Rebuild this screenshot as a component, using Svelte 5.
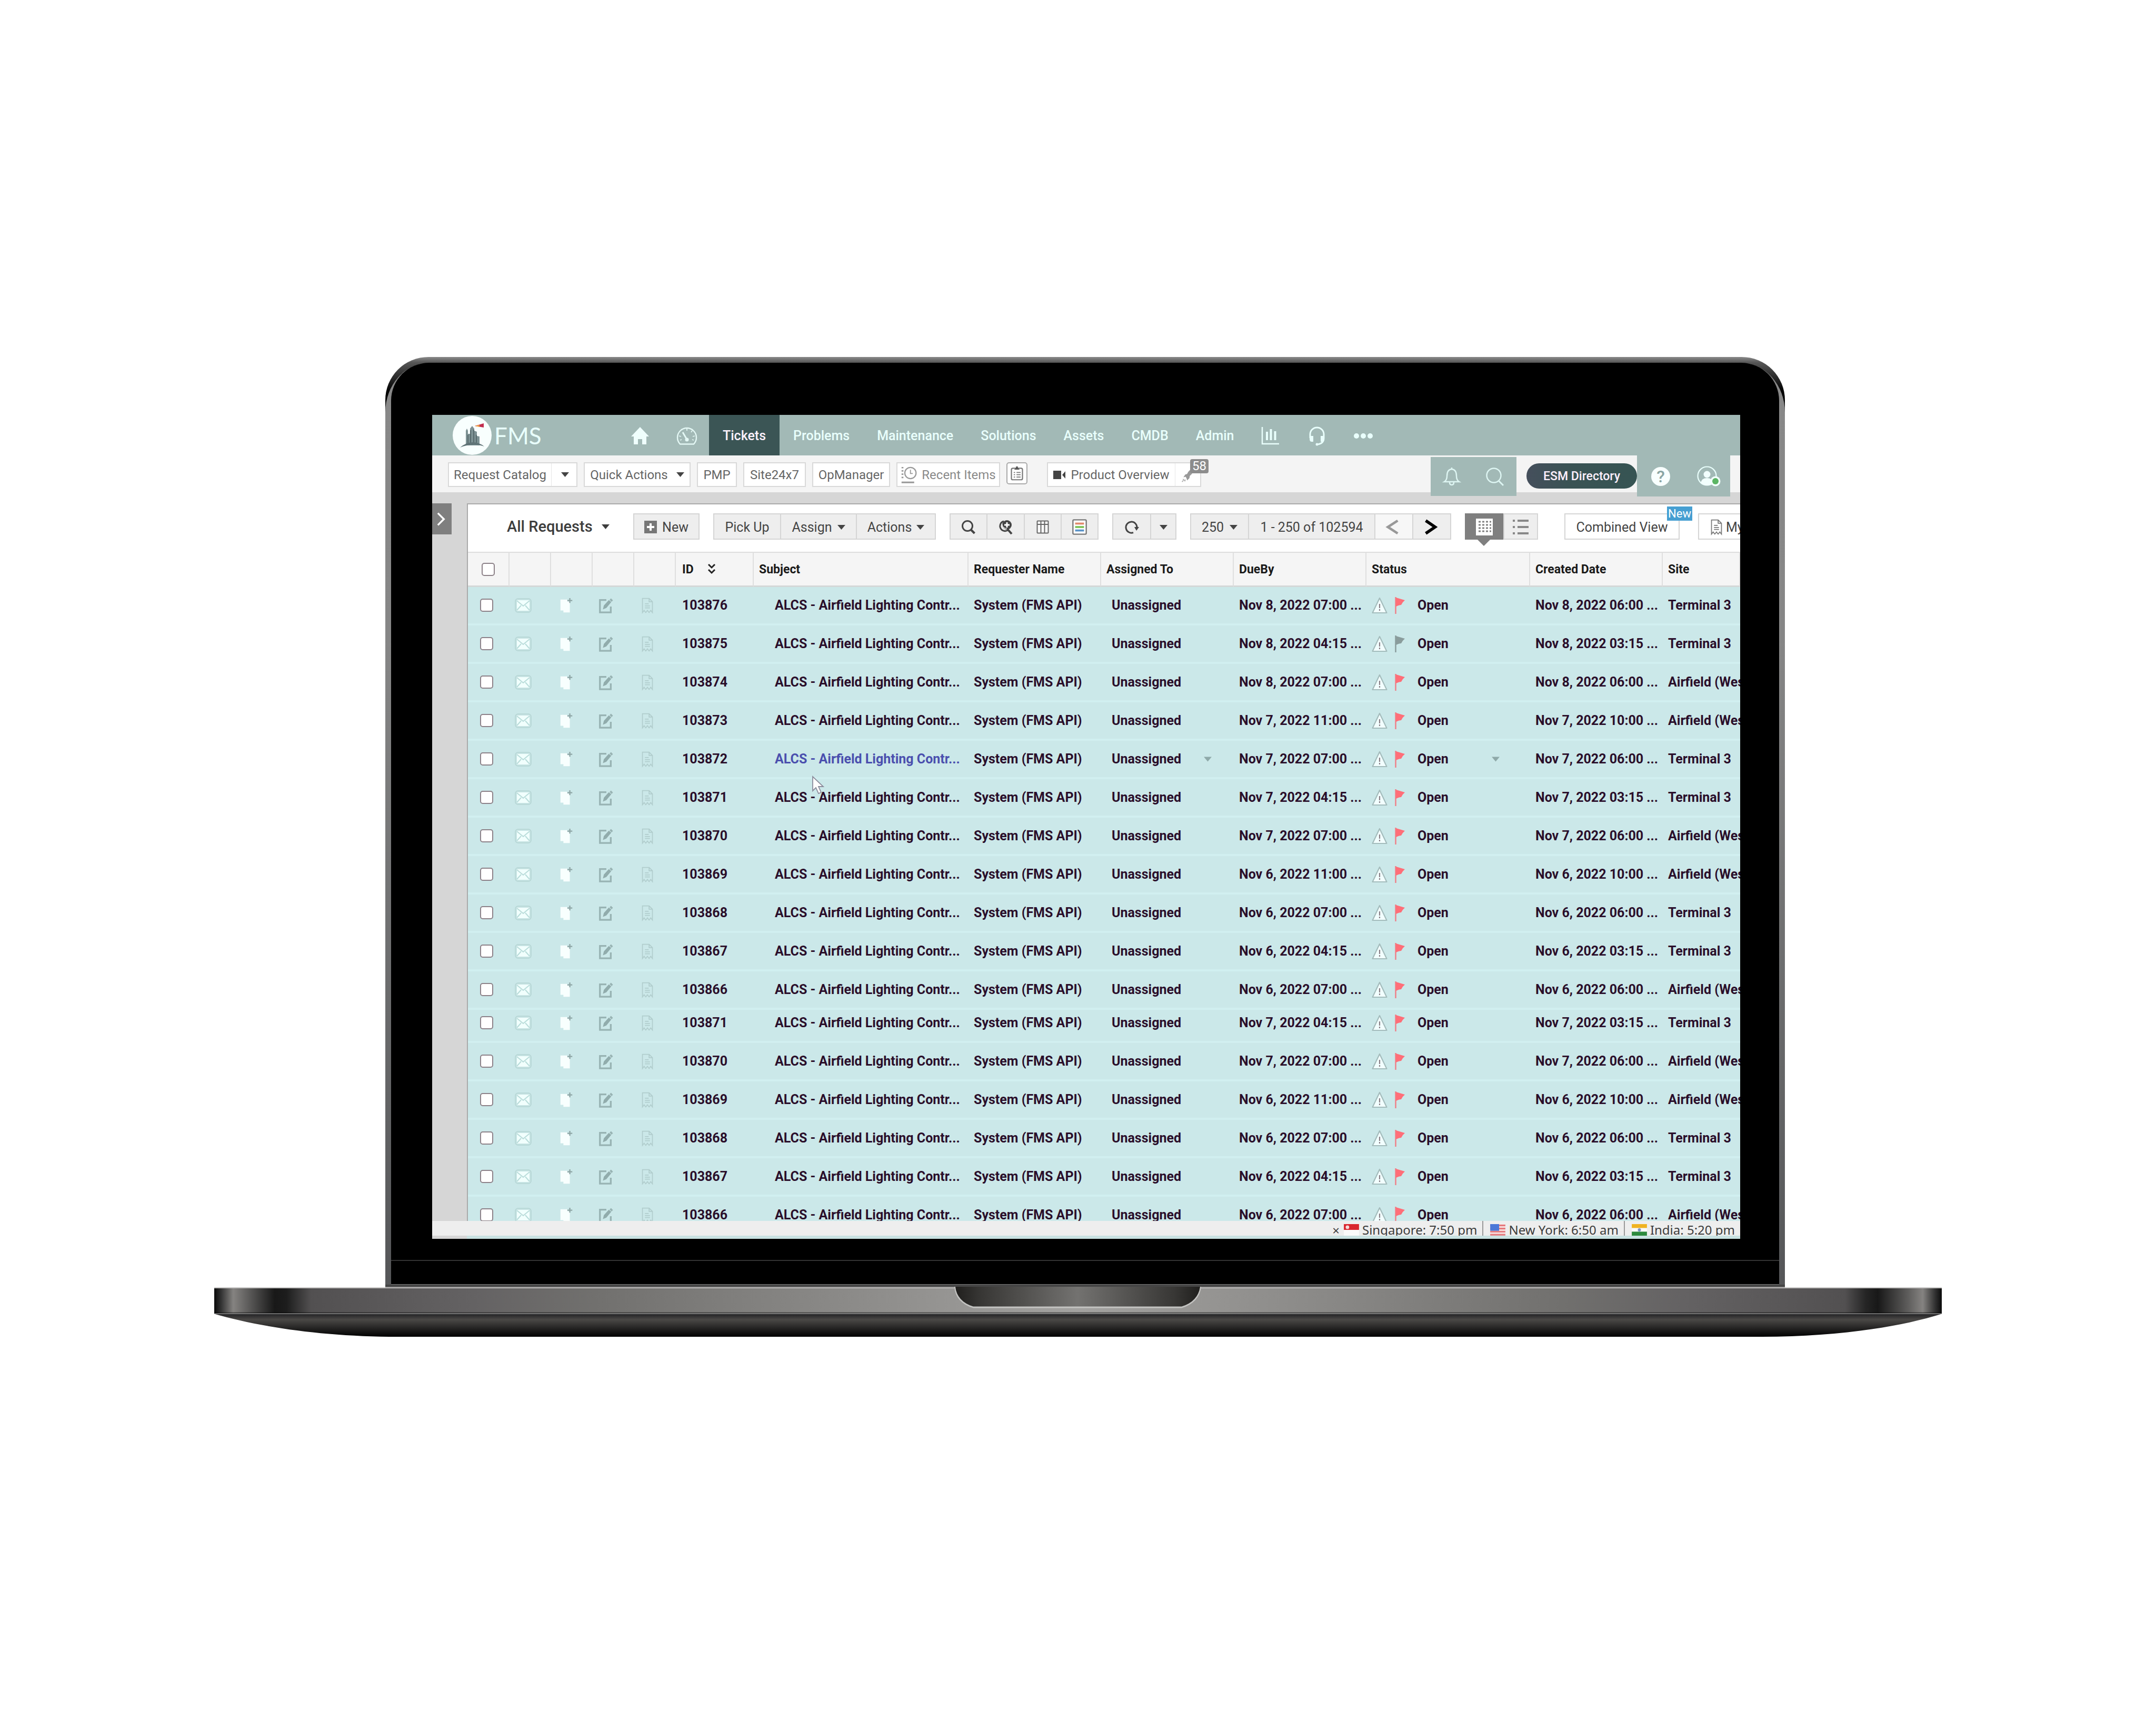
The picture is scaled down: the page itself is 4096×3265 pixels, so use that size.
<script>
  const modules = ['Problems', 'Maintenance', 'Solutions', 'Assets', 'CMDB', 'Admin'];

  const T3 = 'Terminal 3';
  const AW = 'Airfield (West)';
  const tail = [
    ['103871', 'Nov 7, 2022 04:15 ...', 'Nov 7, 2022 03:15 ...', T3],
    ['103870', 'Nov 7, 2022 07:00 ...', 'Nov 7, 2022 06:00 ...', AW],
    ['103869', 'Nov 6, 2022 11:00 ...', 'Nov 6, 2022 10:00 ...', AW],
    ['103868', 'Nov 6, 2022 07:00 ...', 'Nov 6, 2022 06:00 ...', T3],
    ['103867', 'Nov 6, 2022 04:15 ...', 'Nov 6, 2022 03:15 ...', T3],
    ['103866', 'Nov 6, 2022 07:00 ...', 'Nov 6, 2022 06:00 ...', AW]
  ];
  const rows = [
    ['103876', 'Nov 8, 2022 07:00 ...', 'Nov 8, 2022 06:00 ...', T3],
    ['103875', 'Nov 8, 2022 04:15 ...', 'Nov 8, 2022 03:15 ...', T3],
    ['103874', 'Nov 8, 2022 07:00 ...', 'Nov 8, 2022 06:00 ...', AW],
    ['103873', 'Nov 7, 2022 11:00 ...', 'Nov 7, 2022 10:00 ...', AW],
    ['103872', 'Nov 7, 2022 07:00 ...', 'Nov 7, 2022 06:00 ...', T3],
    ...tail,
    ...tail
  ].map(([id, due, created, site], i) => ({
    id, due, created, site,
    hovered: i === 4,
    greyFlag: i === 1,
    short: i === 11
  }));
</script>

{#snippet caret()}
  <svg class="caret" viewBox="0 0 15 9" aria-hidden="true"><path d="M0 0h15L7.5 9z" fill="currentColor" /></svg>
{/snippet}

{#snippet magnifier()}
  <svg class="i28" viewBox="0 0 28 28" fill="none" stroke="#444" aria-hidden="true">
    <circle cx="12" cy="12" r="9.5" stroke-width="3" /><path d="M18.500 19l7 7" stroke-width="4" />
  </svg>
{/snippet}

{#snippet receipt(color)}
  <svg class="i30" viewBox="0 0 30 38" fill="none" stroke={color} stroke-width="2.200" aria-hidden="true">
    <path d="M3 2h16l8 8v26l-4-5-4 5-4-5-4 5-4-5-4 5z" /><path d="M19 2v8h8M9 15h9M9 20h12M9 25h12" />
  </svg>
{/snippet}

<main class="page">
  <div class="lid">
    <div class="rim">
      <div class="bezel">
        <div class="screen">
          <header class="topnav">
            <a class="logo" href="#home">
              <svg class="mark" viewBox="0 0 74 74" aria-hidden="true">
                <circle cx="37" cy="37" r="37" fill="#f8fffe" />
                <path d="M25 56V28l2-4 2 4v6h4V24l4-5 4 5v4l5 2v8l5 1v17z" fill="#7d9294" />
                <path d="M29 55V36M34 54V27M40 54V26M45 55V36" stroke="#56696c" stroke-width="2" />
                <path d="M14 60q12-10 24-10t22 8q-12-4-22-3-12 0-24 5z" fill="#5f7376" />
                <path d="M42 19l17-5v8z" fill="#c22d4e" /><path d="M42 19l9-2v4z" fill="#f0a040" />
              </svg>
              <span>FMS</span>
            </a>
            <nav aria-label="Modules">
              <a href="#start" aria-label="Home">
                <svg class="n36" viewBox="0 0 36 36"><path d="M18 1l17 18h-5v15h-8V24h-8v10H6V19H1z" fill="#effffd" /></svg>
              </a>
              <a href="#dashboard" class="gauge" aria-label="Dashboard">
                <svg class="n40" viewBox="0 0 40 36" fill="none" stroke="#e4f8f5" stroke-width="2.400">
                  <path d="M7 33.500A18 18 0 1 1 33 33.500z" /><path d="M12 11l7 12" stroke-width="3" />
                  <circle cx="20" cy="25" r="3.500" fill="#e4f8f5" stroke="none" />
                  <path d="M20 4v4M30 8l-2 3M35 18l-4 1M5 18l4 1M33 26l-3-1M7 26l3-1" stroke-width="1.800" />
                </svg>
              </a>
              <a href="#tickets" class="current" aria-current="page">Tickets</a>
              {#each modules as name}
                <a href="#{name.toLowerCase()}">{name}</a>
              {/each}
              <a href="#reports" aria-label="Reports">
                <svg class="n36" viewBox="0 0 36 36" fill="none" stroke="#e9fffc">
                  <path d="M2 1v32h32" stroke-width="2.500" /><path d="M11 10v16M18.500 5v21M26.500 9v17" stroke-width="4" />
                </svg>
              </a>
              <a href="#support" aria-label="Support">
                <svg class="n36" viewBox="0 0 36 36" fill="none" stroke="#e9fffc" stroke-width="3">
                  <path d="M5 22v-7a13 13 0 0 1 26 0v7q0 10-11 12" />
                  <path d="M4 18h7v11H8q-4 0-4-5zM32 18h-7v11h3q4 0 4-5z" fill="#e9fffc" stroke="none" />
                  <circle cx="18" cy="34" r="2.500" fill="#e9fffc" stroke="none" />
                </svg>
              </a>
              <a href="#more" aria-label="More">
                <svg class="n36" viewBox="0 0 36 36" fill="#e9fffc"><circle cx="5" cy="18" r="5" /><circle cx="18" cy="18" r="5" /><circle cx="31" cy="18" r="5" /></svg>
              </a>
            </nav>
          </header>

          <div class="subbar">
            <div class="split catalog">
              <button type="button">Request Catalog</button>
              <button type="button" aria-label="Open catalog menu">{@render caret()}</button>
            </div>
            <button type="button" class="chip quick">Quick Actions {@render caret()}</button>
            <button type="button" class="chip pmp">PMP</button>
            <button type="button" class="chip site">Site24x7</button>
            <button type="button" class="chip opm">OpManager</button>
            <button type="button" class="chip recent">
              <svg class="i32" viewBox="0 0 34 36" fill="none" stroke="#999" aria-hidden="true">
                <circle cx="20" cy="14" r="12" stroke-width="2.500" /><path d="M20 7v8h5" stroke-width="2" />
                <path d="M3 1v26" stroke-width="4" stroke-dasharray="3 4" /><path d="M1 34h27" stroke-width="3.500" />
              </svg>
              Recent Items
            </button>
            <button type="button" class="chip clip" aria-label="Announcements">
              <svg class="i28" viewBox="0 0 28 32" fill="none" stroke="#777" stroke-width="2" aria-hidden="true">
                <rect x="2" y="5" width="24" height="25" rx="3" stroke-width="2.500" />
                <path d="M8 8h12l-4-4V1h-4v3z" fill="#555" stroke="none" />
                <path d="M7 14h3M7 19h3M7 24h3M13 14h9M13 19h9M13 24h9" />
              </svg>
            </button>
            <div class="split product">
              <button type="button">
                <svg class="cam" viewBox="0 0 24 18" fill="#444" aria-hidden="true"><path d="M0 1h15v16H0zM23 2v14l-6-7z" /></svg>
                Product Overview
              </button>
              <button type="button" aria-label="Launch tour, 58 items">
                <svg class="i28" viewBox="0 0 28 32" fill="#999" aria-hidden="true">
                  <path d="M26 2q-10 2-14 12l-4 1-4 6 5-1 2 4 1 4 5-5 1-5q8-6 8-16z" />
                  <path d="M3 25l3 3M1 31l3-3M8 26l-1 4" stroke="#aaa" stroke-width="2" />
                </svg>
                <span class="count">58</span>
              </button>
            </div>

            <div class="tools">
              <button type="button" aria-label="Notifications">
                <svg class="n36" viewBox="0 0 36 36" fill="none" stroke="#ddf5f2" stroke-width="2.500">
                  <path d="M18 1v3M4 28q5-3 5-11 0-12 9-13 9 1 9 13 0 8 5 11zM14 29q0 5 4 5t4-5" />
                </svg>
              </button>
              <button type="button" aria-label="Search">
                <svg class="n36" viewBox="0 0 36 36" fill="none" stroke="#ddf5f2" stroke-width="2.500"><circle cx="16" cy="16" r="13.500" /><path d="M25 26l9 9" stroke-width="3" /></svg>
              </button>
            </div>
            <button type="button" class="pill">ESM Directory</button>
            <div class="account">
              <button type="button" class="help" aria-label="Help">?</button>
              <button type="button" aria-label="Profile">
                <svg class="avatar" viewBox="0 0 46 40">
                  <circle cx="19" cy="19" r="17.500" fill="none" stroke="#e9fffc" stroke-width="2.200" />
                  <circle cx="19" cy="16" r="6.500" fill="#f2fffd" /><path d="M7 32q2-9 12-9t12 9q-5 5-12 5T7 32z" fill="#f2fffd" />
                  <circle cx="35" cy="29" r="9.500" fill="#f2fffd" /><circle cx="35" cy="29" r="6" fill="#5bb564" />
                </svg>
              </button>
            </div>
          </div>

          <div class="body">
            <aside>
              <button type="button" aria-label="Expand side panel">
                <svg class="chev" viewBox="0 0 18 32" fill="none" stroke="#fff" stroke-width="4"><path d="M2 3l13 13L2 29" /></svg>
              </button>
            </aside>

            <section class="panel" aria-label="Requests">
              <div class="toolbar">
                <button type="button" class="view">All Requests {@render caret()}</button>
                <div class="group new">
                  <button type="button">
                    <svg class="plus" viewBox="0 0 24 24" aria-hidden="true"><path d="M0 0h24v24H0z" fill="#777" /><path d="M12 5v14M5 12h14" stroke="#fff" stroke-width="4" /></svg>
                    New
                  </button>
                </div>
                <div class="group acts">
                  <button type="button">Pick Up</button>
                  <button type="button">Assign {@render caret()}</button>
                  <button type="button">Actions {@render caret()}</button>
                </div>
                <div class="group finders">
                  <button type="button" aria-label="Search">{@render magnifier()}</button>
                  <button type="button" aria-label="Advanced search">
                    <svg class="i28" viewBox="0 0 28 28" fill="none" stroke="#444" aria-hidden="true">
                      <path d="M11 3A9.500 9.500 0 1 0 20 19" stroke-width="3" /><circle cx="17" cy="10" r="9" fill="#444" stroke="none" />
                      <path d="M17 5v10M12 10h10" stroke="#fff" stroke-width="3" /><path d="M18 18l8 9" stroke-width="4" /><path d="M8 9q0 8 9 8" stroke="#ddd" stroke-width="1.500" />
                    </svg>
                  </button>
                  <button type="button" aria-label="Columns">
                    <svg class="i24" viewBox="0 0 24 26" fill="none" stroke="#666" stroke-width="2" aria-hidden="true"><rect x="1.500" y="1.500" width="21" height="23" rx="1" fill="#fafafa" /><path d="M8.500 2v22M15.500 2v22M2 8h20" /></svg>
                  </button>
                  <button type="button" aria-label="Colour rules">
                    <svg class="i30" viewBox="0 0 30 32" aria-hidden="true">
                      <rect x="1.500" y="1.500" width="27" height="29" rx="2" fill="#fff" stroke="#777" stroke-width="2.500" />
                      <path d="M6 9h18" stroke="#e08a6c" stroke-width="4" /><path d="M6 16h18" stroke="#7dc257" stroke-width="4" /><path d="M6 23h18" stroke="#5a93c8" stroke-width="4" />
                    </svg>
                  </button>
                </div>
                <div class="group reload">
                  <button type="button" aria-label="Refresh">
                    <svg class="i28" viewBox="0 0 28 28" fill="none" stroke="#444" stroke-width="3" aria-hidden="true"><path d="M17 24.500A10.500 10.500 0 1 1 24 15" /><path d="M19 14h9l-5 7z" fill="#444" stroke="none" /></svg>
                  </button>
                  <button type="button" aria-label="Refresh interval">{@render caret()}</button>
                </div>
                <div class="group pager">
                  <label class="size">
                    <select aria-label="Rows per page"><option>250</option></select>
                    {@render caret()}
                  </label>
                  <span>1 - 250 of 102594</span>
                  <button type="button" class="prev" aria-label="Previous page">
                    <svg class="i28" viewBox="0 0 28 30" fill="none" stroke="#999" stroke-width="5"><path d="M24 2L4 15l20 13" /></svg>
                  </button>
                  <button type="button" aria-label="Next page">
                    <svg class="i28" viewBox="0 0 28 30" fill="none" stroke="#000" stroke-width="6"><path d="M4 2l19 13L4 28" /></svg>
                  </button>
                </div>
                <div class="group layout">
                  <button type="button" class="on" aria-label="Grid view">
                    <svg class="i32" viewBox="0 0 32 32"><path d="M0 0h32v32H0z" fill="#fff" /><path d="M5 6h24M5 12h24M5 18h24M5 24h24" stroke="#808080" stroke-width="3" stroke-dasharray="4 3" /></svg>
                  </button>
                  <button type="button" aria-label="List view">
                    <svg class="i30" viewBox="0 0 30 30" stroke="#888" stroke-width="4"><path d="M0 3h4M9 3h21M0 15h4M9 15h21M0 27h4M9 27h21" /></svg>
                  </button>
                </div>
                <div class="group combined">
                  <button type="button">Combined View</button>
                  <span class="tag">New</span>
                </div>
                <div class="group mine">
                  <button type="button">{@render receipt('#777')} My</button>
                </div>
              </div>

              <table>
                <colgroup>
                  <col class="c-tool" /><col class="c-tool" /><col class="c-tool" /><col class="c-tool" /><col class="c-tool" />
                  <col class="c-id" /><col class="c-subject" /><col class="c-mid" /><col class="c-mid" /><col class="c-mid" />
                  <col class="c-status" /><col class="c-mid" /><col class="c-site" />
                </colgroup>
                <thead>
                  <tr>
                    <th class="tick"><input type="checkbox" aria-label="Select all requests" /></th>
                    <td></td><td></td><td></td><td></td>
                    <th scope="col">ID
                      <svg class="sort" viewBox="0 0 14 22" fill="none" stroke="#222" stroke-width="3" aria-hidden="true"><path d="M1 2l6 6 6-6M1 12l6 6 6-6" /></svg>
                    </th>
                    <th scope="col">Subject</th><th scope="col">Requester Name</th><th scope="col">Assigned To</th>
                    <th scope="col">DueBy</th><th scope="col">Status</th><th scope="col">Created Date</th><th scope="col">Site</th>
                  </tr>
                </thead>
                <tbody>
                  {#each rows as r}
                    <tr class:short={r.short}>
                      <td class="tick"><input type="checkbox" aria-label="Select request {r.id}" /></td>
                      <td>
                        <svg class="i32" viewBox="0 0 32 28" aria-hidden="true"><rect x="1" y="1" width="30" height="26" rx="5" fill="#c6e3e3" stroke="#b5d5d4" stroke-width="1.500" /><path d="M4 4h24v20H4z" fill="#f1fffd" /><path d="M4 5l12 10L28 5M4 23l8-9M28 23l-8-9" fill="none" stroke="#b9dcda" stroke-width="2" /></svg>
                      </td>
                      <td class="note">
                        <svg class="i30" viewBox="0 0 30 32" aria-hidden="true"><path d="M3 4h14v4h5v22H9v-4H3z" fill="#f8fffe" /><path d="M22 1v10M17 6h10" stroke="#8ea5a5" stroke-width="2.500" /></svg>
                      </td>
                      <td>
                        <svg class="i30" viewBox="0 0 30 32" fill="none" stroke="#98b3b3" aria-hidden="true"><path d="M16 5H3v25h22V18" stroke-width="3.500" /><path d="M9 24l2-8L21 5l5 4-10 12z" fill="#91acac" stroke="none" /><path d="M24 3l4 4" stroke-width="4" /></svg>
                      </td>
                      <td>{@render receipt('#b1cdcd')}</td>
                      <td>{r.id}</td>
                      <td class="subject"><a href="#request-{r.id}" class:hovered={r.hovered}>ALCS - Airfield Lighting Contr...</a></td>
                      <td>System (FMS API)</td>
                      <td class="assigned">Unassigned{#if r.hovered}<i class="drop a">{@render caret()}</i>{/if}</td>
                      <td>{r.due}</td>
                      <td>
                        <div class="status">
                          <svg class="warn" viewBox="0 0 30 32" aria-hidden="true"><path d="M15 2l13.500 28h-27z" fill="#f2ffff" stroke="#a4bcbc" stroke-width="2.200" stroke-linejoin="round" /><path d="M15 13v8M15 23v3" stroke="#8b7f86" stroke-width="2.200" /></svg>
                          <svg class="flag" viewBox="0 0 20 34" aria-hidden="true"><path d="M1.500 1v32" stroke={r.greyFlag ? '#8a9c9c' : '#ee8088'} stroke-width="2.500" /><path d="M2 2l17 5q-4 3-7 9-4 0-10 3z" fill={r.greyFlag ? '#8a9c9c' : '#ff6e78'} /></svg>
                          <span>Open</span>
                          {#if r.hovered}<i class="drop s">{@render caret()}</i>{/if}
                        </div>
                      </td>
                      <td>{r.created}</td>
                      <td>{r.site}</td>
                    </tr>
                  {/each}
                </tbody>
              </table>
              <svg class="pointer" viewBox="0 0 24 36" aria-hidden="true"><path d="M2 2v27l6-6 5 11 5-2-5-11h9z" fill="#fff" stroke="#8b8b9b" stroke-width="1.800" /></svg>
            </section>
          </div>

          <footer>
            <button type="button" class="close" aria-label="Close clocks">×</button>
            <span class="clock">
              <svg class="country" viewBox="0 0 34 26" aria-hidden="true"><path d="M0 0h34v13H0z" fill="#d9262e" /><path d="M0 13h34v13H0z" fill="#fafafa" /><circle cx="8" cy="7" r="4" fill="#f5dcdc" /></svg>
              Singapore: 7:50 pm
            </span>
            <span class="clock">
              <svg class="country" viewBox="0 0 34 26" aria-hidden="true"><path d="M0 0h34v26H0z" fill="#f7dede" /><path d="M0 3h34M0 10h34M0 17h34M0 24h34" stroke="#e4787c" stroke-width="3.500" /><path d="M0 0h20v15H0z" fill="#4b78d8" /></svg>
              New York: 6:50 am
            </span>
            <span class="clock">
              <svg class="country" viewBox="0 0 34 26" aria-hidden="true"><path d="M0 0h34v9H0z" fill="#f0b323" /><path d="M0 9h34v8H0z" fill="#fafafa" /><path d="M0 17h34v9H0z" fill="#2d8a3e" /><circle cx="17" cy="13" r="3.500" fill="#7e93c4" /></svg>
              India: 5:20 pm
            </span>
          </footer>
          <div class="sliver"></div>
        </div>
        <div class="chin"></div>
      </div>
    </div>
  </div>

  <svg class="base" viewBox="0 0 3282 96" preserveAspectRatio="none" aria-hidden="true">
    <defs>
      <linearGradient id="deck" x1="0" x2="1" y1="0" y2="0">
        <stop offset="0" stop-color="#0a0a0a" /><stop offset=".004" stop-color="#333" /><stop offset=".011" stop-color="#858381" />
        <stop offset=".02" stop-color="#5c5b5a" /><stop offset=".035" stop-color="#181818" /><stop offset=".042" stop-color="#1d1d1d" />
        <stop offset=".044" stop-color="#252525" /><stop offset=".056" stop-color="#525051" /><stop offset=".15" stop-color="#646263" />
        <stop offset=".22" stop-color="#71706e" /><stop offset=".5" stop-color="#a3a2a0" />
        <stop offset=".78" stop-color="#71706e" /><stop offset=".85" stop-color="#646263" /><stop offset=".944" stop-color="#525051" />
        <stop offset=".956" stop-color="#252525" /><stop offset=".963" stop-color="#181818" /><stop offset=".98" stop-color="#5c5b5a" />
        <stop offset=".989" stop-color="#858381" /><stop offset=".996" stop-color="#333" /><stop offset="1" stop-color="#0a0a0a" />
      </linearGradient>
      <linearGradient id="belly" x1="0" x2="0" y1="0" y2="1">
        <stop offset="0" stop-color="#222224" /><stop offset=".25" stop-color="#4a4846" /><stop offset=".55" stop-color="#2c2b2a" /><stop offset="1" stop-color="#000" />
      </linearGradient>
      <linearGradient id="thumb" x1="0" x2="1" y1="0" y2="0">
        <stop offset="0" stop-color="#201f1d" /><stop offset=".1" stop-color="#373634" /><stop offset=".5" stop-color="#737270" /><stop offset=".9" stop-color="#373634" /><stop offset="1" stop-color="#201f1d" />
      </linearGradient>
    </defs>
    <path d="M0 52C90 78 210 96 350 96H2940C3080 96 3200 78 3282 52z" fill="url(#belly)" />
    <path d="M0 2h3282v50H0z" fill="url(#deck)" />
    <path d="M0 49h3282v3H0z" fill="#000" opacity=".45" />
    <path d="M0 51h3282v1.500H0z" fill="#8a8a8a" />
    <path d="M0 1h3282v2H0z" fill="#c4c3c2" />
    <path d="M325 0h2659v1.500H325z" fill="#8a8888" />
    <path d="M1406 0q2 30 36 41h396q34-11 37-41z" fill="#c3c3c1" />
    <path d="M1408 0q3 28 34 38h396q31-10 35-38z" fill="url(#thumb)" />
  </svg>
</main>

<style>
  :global(body) { margin: 0; background: #fff; }
  .page { box-sizing: border-box; min-height: 100vh; padding: 678px 407px 0; font-family: Roboto, "Liberation Sans", sans-serif; font-size: 25px; color: #444; }
  .page :global(*) { box-sizing: border-box; }
  svg { display: block; flex: none; overflow: visible; }
  button { display: flex; align-items: center; justify-content: center; margin: 0; padding: 0; border: 0; background: none; font: inherit; color: inherit; white-space: nowrap; }
  a { color: inherit; text-decoration: none; }

  .lid { margin: 0 298px 0 325px; padding-top: 11px; border-radius: 82px 82px 0 0; background: linear-gradient(#8a8a8a, #555 11px, #000 66px); overflow: hidden; }
  .rim { padding: 0 11px; border-radius: 84px 84px 0 0 / 94px 94px 0 0; background: linear-gradient(#888, #868686 30%, #555658); border-bottom: 4px solid #454545; }
  .bezel { padding: 99px 74px 0 78px; border-radius: 72px 72px 0 0; background: #000; }
  .chin { height: 87px; margin: 0 -74px 0 -78px; background: linear-gradient(#333, #333) 0 40px / 100% 2px no-repeat; border-bottom: 1px solid #777; }
  .base { width: 100%; height: 95px; }

  .screen { display: flex; flex-direction: column; aspect-ratio: 2485 / 1565; overflow: hidden; background: #d6d6d6; }

  .topnav { display: flex; flex: none; height: 77px; background: #a2b9b6; color: #e9fffc; }
  .logo { display: flex; flex: none; align-items: center; gap: 5px; width: 351px; padding-left: 39px; font-family: Lato, sans-serif; font-size: 44px; }
  .mark { width: 74px; height: 74px; }
  nav { display: flex; font-size: 25px; font-weight: 500; }
  nav a { display: flex; align-items: center; padding: 2px 26px 0; white-space: nowrap; }
  nav a.gauge { padding-right: 22px; padding-left: 25px; }
  nav a.current { background: #3b5555; color: #fdf2fd; }
  .n36 { width: 36px; height: 36px; }
  .n40 { width: 40px; height: 36px; }

  .subbar { display: flex; flex: none; align-items: flex-start; gap: 12px; height: 70px; padding: 0 19px 0 30px; background: #f4f4f4; color: #666; font-size: 24px; }
  .chip, .split { flex: none; height: 47px; margin-top: 13px; border: 2px solid #d9d9d9; background: #fff; }
  .split { display: flex; }
  .split button + button { border-left: 1px solid #e6e6e6; }
  .subbar .caret { color: #444; }
  .catalog { width: 246px; }
  .catalog button:first-child { flex: 1; }
  .catalog button + button { width: 48px; padding-left: 4px; }
  .quick { width: 203px; gap: 16px; }
  .pmp { width: 76px; }
  .site { width: 119px; }
  .opm { width: 148px; }
  .recent { width: 197px; gap: 8px; color: #8a8a8a; }
  .clip { width: 40px; height: 42px; border-color: #aaa; border-radius: 5px; }
  .product { width: 293px; margin-left: 25px; }
  .product button:first-child { flex: 1; gap: 9px; }
  .product button + button { position: relative; width: 48px; }
  .count { position: absolute; top: -8px; right: -16px; padding: 0 4px; border-radius: 4px; background: #8c8c8c; color: #fff; font-size: 24px; line-height: 27px; }
  .cam { width: 24px; height: 18px; }
  .caret { width: 15px; height: 9px; }

  .tools, .account { position: relative; display: flex; flex: none; align-items: center; background: #a2b9b6; }
  .tools { width: 163px; height: 74px; margin: 3px 7px 0 auto; justify-content: space-between; padding: 0 23px 0 22px; }
  .pill { flex: none; width: 210px; height: 48px; margin: 15px -12px 0 0; border-radius: 24px; background: linear-gradient(90deg, #454f5c, #3a5354 40%, #365453); color: #fdf0fd; font-size: 23px; font-weight: 500; }
  .account { width: 177px; height: 78px; justify-content: space-between; padding: 2px 17px 0 27px; }
  .help { width: 36px; height: 36px; border-radius: 50%; background: #f8fffe; color: #8aa5a3; font-size: 32px; font-weight: 500; }
  .avatar { width: 46px; height: 40px; }

  .body { display: flex; flex: 1; min-height: 0; padding-top: 21px; overflow: hidden; }
  aside { flex: none; width: 66px; }
  aside button { width: 37px; height: 59px; padding-right: 4px; background: #7f7f7f; }
  .chev { width: 16px; height: 28px; }
  .panel { position: relative; flex: 1; min-width: 0; border: solid #aaa; border-width: 2px 0 0 2px; background: #fff; overflow: hidden; }

  .toolbar { display: flex; align-items: flex-start; gap: 26px; height: 90px; padding: 17px 0 0 74px; }
  .view { flex: none; width: 195px; height: 50px; margin-right: 19px; justify-content: space-between; font-size: 29px; font-weight: 500; color: #3d3d3d; }
  .group { position: relative; display: flex; flex: none; height: 50px; border: 2px solid #d5d5d5; background: #eee; color: #444; }
  .group > * { display: flex; align-items: center; justify-content: center; padding-top: 2px; gap: 10px; }
  .group > * + * { border-left: 2px solid #d5d5d5; }
  .new { width: 126px; }
  .new button { flex: 1; }
  .plus { width: 24px; height: 24px; }
  .acts { width: 423px; }
  .acts > :nth-child(1) { width: 125px; }
  .acts > :nth-child(2) { width: 144px; }
  .acts > :nth-child(3) { flex: 1; gap: 9px; }
  .finders { width: 283px; }
  .finders > * { flex: 1; }
  .reload { width: 122px; }
  .reload > :first-child { width: 70px; }
  .reload > :last-child { flex: 1; }
  .pager { width: 496px; }
  .size { width: 108px; }
  .size select { appearance: none; padding: 0; border: 0; background: none; font: inherit; color: inherit; }
  .pager span { flex: 1; white-space: nowrap; }
  .pager button { width: 72px; padding-right: 4px; }
  .pager .prev { background: #f7f7f7; }
  .layout { width: 139px; }
  .layout > * { flex: 1; }
  .layout .on { position: relative; flex: none; width: 73px; margin: -2px 0 -2px -2px; background: #7f7f7f; }
  .layout .on::after { content: ""; position: absolute; top: 100%; left: 24px; border: 12px solid transparent; border-top-color: #7f7f7f; }
  .combined { width: 219px; margin-right: 9px; margin-left: 24px; background: #fff; }
  .combined button { flex: 1; }
  .combined .tag { position: absolute; top: -15px; right: -26px; padding: 0 2px; border: 0; background: #469fd2; color: #fff; font-size: 22px; line-height: 27px; }
  .mine { width: 219px; background: #fff; }
  .mine button { margin-left: 18px; gap: 3px; }

  .i24 { width: 24px; height: 26px; }
  .i28 { width: 28px; height: 28px; }
  .i30 { width: 30px; height: 30px; }
  .i32 { width: 32px; height: 32px; }

  table { width: 100%; table-layout: fixed; border-collapse: separate; border-spacing: 0; }
  .c-tool { width: 79px; }
  .c-id { width: 148px; }
  .c-subject { width: 408px; }
  .c-mid { width: 252px; }
  .c-status { width: 311px; }
  th, td { padding: 0 0 0 10px; text-align: left; white-space: nowrap; overflow: hidden; vertical-align: middle; }
  thead th, thead td { height: 67px; border-top: 2px solid #ddd; border-bottom: 3px solid #d4d8d8; border-right: 2px solid #dfdfdf; background: #f5f5f5; color: #1a1a1a; font-size: 23px; font-weight: 700; }
  .sort { display: inline-block; width: 14px; height: 22px; margin-left: 22px; vertical-align: -3px; }
  tbody td { height: 73px; border-bottom: 4px solid #d1eff0; background: #cbe8e9; color: #2a0e2a; font-size: 25px; font-weight: 700; }
  tbody td:nth-child(6), thead th:nth-child(6) { padding-left: 12px; }
  .short td { height: 63px; padding-bottom: 10px; }
  tbody .subject { padding-left: 40px; }
  .hovered { color: #4a4fae; }
  tbody .assigned { position: relative; padding-left: 20px; }
  td.note { padding-left: 14px; }
  .tick { padding-left: 23px; }
  thead .tick { padding-left: 26px; }
  input { display: block; appearance: none; width: 25px; height: 25px; margin: 0; border: 2px solid #8d8289; border-radius: 5px; background: #fff; }
  .status { position: relative; display: flex; align-items: center; }
  .warn { width: 30px; height: 32px; margin-right: 14px; }
  .flag { width: 20px; height: 34px; margin-right: 23px; }
  .drop { position: absolute; top: 50%; color: #8fa9a9; transform: translateY(-50%); }
  .drop.a { right: 42px; }
  .drop.s { right: 58px; }
  .pointer { position: absolute; top: 515px; left: 653px; width: 24px; height: 36px; }

  footer { display: flex; flex: none; justify-content: flex-end; height: 28px; overflow: hidden; background: #eee; color: #3c3c3c; font-family: "Noto Sans", sans-serif; font-size: 24px; line-height: 34px; white-space: nowrap; }
  .close { align-items: flex-start; width: 14px; margin-right: 6px; line-height: 36px; }
  .clock { display: flex; gap: 4px; padding: 0 10px 0 0; }
  .clock + .clock { border-left: 2px solid #999; padding-left: 11px; }
  .country { width: 33px; height: 22px; margin-top: 6px; }
  .sliver { flex: none; height: 6px; margin-left: 66px; background: #c9e2e2; }
</style>
